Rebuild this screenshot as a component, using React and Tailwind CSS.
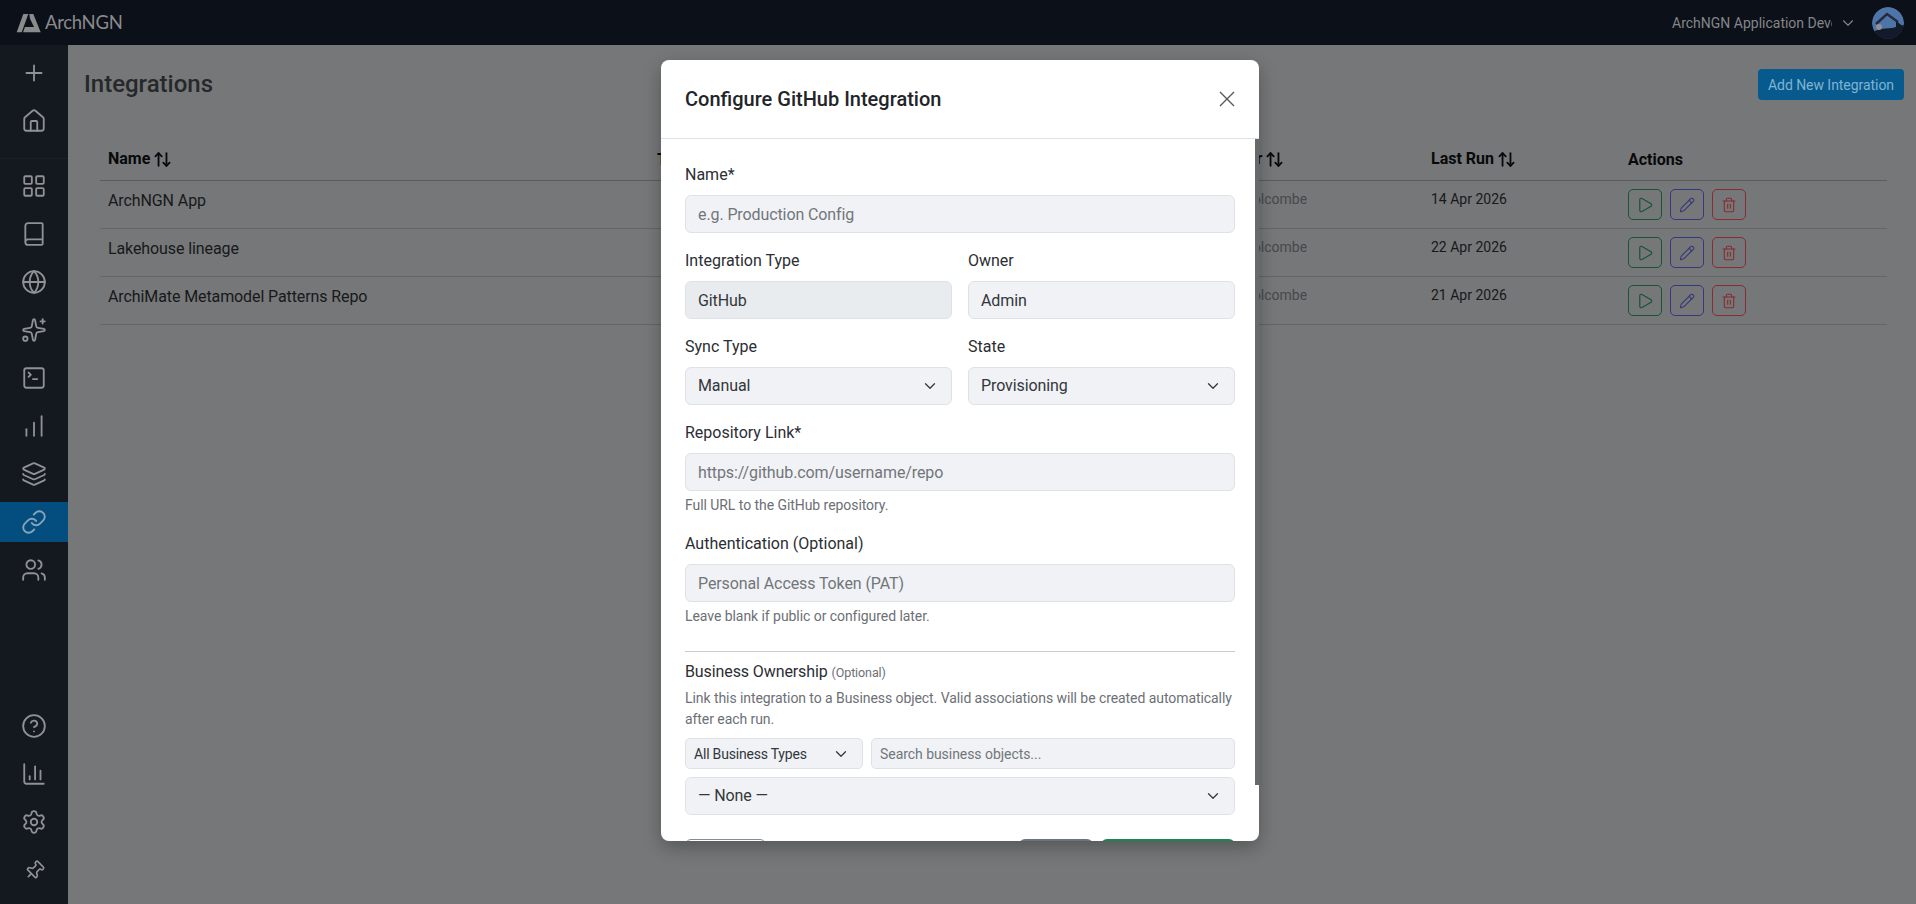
import React from 'react';
import {
  Plus, House, LayoutGrid, Book, Globe, Sparkles, SquareTerminal, ChartNoAxesColumnIncreasing,
  Layers, Link, Users, CircleHelp, ChartColumn, Settings, Pin, Play, Pencil, Trash2, ChevronDown, ArrowUpDown,
} from 'lucide-react';

function NavItem({ icon: Icon, active, small }) {
  return (
    <div className={`h-10 w-full flex items-center justify-center ${active ? 'bg-[#034e7e] text-[#8aa5b8]' : 'text-[#8f9194]'}`}>
      {small
        ? <Icon size={21} strokeWidth={1.9} className="rotate-45" />
        : <Icon size={26} strokeWidth={1.7} />}
    </div>
  );
}

function SortHead({ children }) {
  return (
    <th className="px-2 pb-[9px] pt-[10px] text-left align-top text-base leading-6 font-bold text-[#08090a] border-b border-[#5a5c5e]">
      <span className="inline-flex items-center gap-[3px]">
        {children}
        <ArrowUpDown size={19} strokeWidth={2.3} />
      </span>
    </th>
  );
}

function ActionButtons() {
  return (
    <div className="flex gap-2">
      <button className="w-[34px] h-[31px] rounded-[5px] border border-[#175533] text-[#175533] flex items-center justify-center"><Play size={18} strokeWidth={1.6} /></button>
      <button className="w-[34px] h-[31px] rounded-[5px] border border-[#35377f] text-[#35377f] flex items-center justify-center"><Pencil size={16} strokeWidth={1.6} /></button>
      <button className="w-[34px] h-[31px] rounded-[5px] border border-[#872c32] text-[#872c32] flex items-center justify-center"><Trash2 size={16} strokeWidth={1.6} /></button>
    </div>
  );
}

function Row({ name, date }) {
  const line = 'border-b border-[#636567] align-top';
  return (
    <tr>
      <td className={`${line} px-2 pt-2 text-base leading-6 tracking-[-0.1px] text-[#17191b]`}>{name}</td>
      <td className={line}></td>
      <td className={`${line} px-2 pt-2 text-sm leading-[21px] text-[#47494c] whitespace-nowrap`}>alex.holcombe</td>
      <td className={`${line} px-2 pt-2 text-sm leading-[21px] text-[#17191b]`}>{date}</td>
      <td className={`${line} px-2 pt-2 pb-2`}><ActionButtons /></td>
    </tr>
  );
}

function Label({ children }) {
  return <label className="block text-base leading-6 mb-2 text-[#2b2e33]">{children}</label>;
}

const fieldBase = 'block w-full h-[38px] px-3 rounded-[6px] border border-[#dee2e6] text-base tracking-[-0.1px] text-[#33373b] placeholder:text-[#72767b] outline-none';

function Input({ placeholder, value, disabled }) {
  return <input readOnly placeholder={placeholder} value={value} className={`${fieldBase} ${disabled ? 'bg-[#e9ecef]' : 'bg-[#f0f2f5]'}`} />;
}

function Select({ children, small, className = '' }) {
  return (
    <div className={`relative ${className}`}>
      <select className={small
        ? 'block w-full h-[31px] pl-2 pr-8 rounded-[5px] border border-[#dee2e6] bg-[#f0f2f5] text-sm tracking-[-0.2px] text-[#33373b] appearance-none outline-none'
        : `${fieldBase} bg-[#f0f2f5] appearance-none pr-9`}>
        <option>{children}</option>
      </select>
      <ChevronDown size={18} strokeWidth={1.75} className="absolute right-[13px] top-1/2 -translate-y-1/2 text-[#343a40] pointer-events-none" />
    </div>
  );
}

function Logo() {
  return (
    <div className="flex items-center gap-[3px] pl-4">
      <svg width="26" height="20" viewBox="0 0 26 20" fill="#8a8b8d">
        <path d="M7.3 1 H12.3 L5.7 19.3 H0.7 Z" />
        <path d="M13.3 1 H17.3 L24.7 19.3 H7 L9 14 H18 L14 5.7 Z" />
      </svg>
      <span className="font-['Lato',sans-serif] text-[18.5px] leading-none text-[#8a8b8d] tracking-[-0.3px]">ArchNGN</span>
    </div>
  );
}

function Avatar() {
  return (
    <svg width="32" height="32" viewBox="0 0 32 32" className="rounded-full">
      <circle cx="16" cy="16" r="16" fill="#4f74a8" />
      <path d="M0 25 L8 22 L20 21 L32 18 V32 H0 Z" fill="#131a2a" />
      <path d="M4 17 L15 7 L26 15" fill="none" stroke="#232b3d" strokeWidth="2.5" />
      <path d="M24 14 L32 20 V26 H24 Z" fill="#131a2a" />
      <circle cx="7" cy="20" r="3" fill="#8f9196" />
    </svg>
  );
}

export default function App() {
  const th = 'px-2 pb-[8px] pt-[11px] text-left align-top text-base leading-6 font-bold text-[#08090a] border-b border-[#5a5c5e]';
  return (
    <div className="relative w-full h-[904px] overflow-hidden bg-[#757778] font-['Roboto',sans-serif]">
      <header className="h-[45px] bg-[#0c1018] flex items-center justify-between">
        <Logo />
        <div className="flex items-center pr-3">
          <span className="w-40 overflow-hidden whitespace-nowrap text-sm text-[#83868a]">ArchNGN Application Development</span>
          <ChevronDown size={18} strokeWidth={1.5} className="ml-[7px] text-[#83868a]" />
          <div className="ml-[15px]"><Avatar /></div>
        </div>
      </header>
      <div className="flex h-[859px]">
        <aside className="w-[68px] shrink-0 bg-[#14181f] flex flex-col justify-between pb-[14px] pt-2">
          <div>
            <div className="flex flex-col gap-2 pb-[17px] border-b border-[#1b1f27]">
              <NavItem icon={Plus} />
              <NavItem icon={House} />
            </div>
            <div className="flex flex-col gap-2 pt-[7px]">
              <NavItem icon={LayoutGrid} />
              <NavItem icon={Book} />
              <NavItem icon={Globe} />
              <NavItem icon={Sparkles} />
              <NavItem icon={SquareTerminal} />
              <NavItem icon={ChartNoAxesColumnIncreasing} />
              <NavItem icon={Layers} />
              <NavItem icon={Link} active />
              <NavItem icon={Users} />
            </div>
          </div>
          <div className="flex flex-col gap-2">
            <NavItem icon={CircleHelp} />
            <NavItem icon={ChartColumn} />
            <NavItem icon={Settings} />
            <NavItem icon={Pin} small />
          </div>
        </aside>
        <main className="flex-1 pl-4 pr-3 pt-6">
          <div className="h-[31px] flex items-center justify-between">
            <h1 className="text-2xl leading-[28px] -mt-[2px] font-medium text-[#26282a]">Integrations</h1>
            <button className="h-[31px] w-[146px] rounded-[4px] bg-[#075a8d] text-sm tracking-[-0.05px] text-[#7fb4d3]">Add New Integration</button>
          </div>
          <div className="mt-[37px] ml-4 mr-[17px]">
            <table className="w-full table-fixed border-separate border-spacing-0">
              <colgroup>
                <col className="w-[549px]" />
                <col className="w-[559px]" />
                <col className="w-[215px]" />
                <col className="w-[197px]" />
                <col />
              </colgroup>
              <thead>
                <tr>
                  <SortHead>Name</SortHead>
                  <th className={th}>Type</th>
                  <SortHead>Owner</SortHead>
                  <SortHead>Last Run</SortHead>
                  <th className={th}>Actions</th>
                </tr>
              </thead>
              <tbody>
                <Row name="ArchNGN App" date="14 Apr 2026" />
                <Row name="Lakehouse lineage" date="22 Apr 2026" />
                <Row name="ArchiMate Metamodel Patterns Repo" date="21 Apr 2026" />
              </tbody>
            </table>
          </div>
        </main>
      </div>

      <div className="absolute left-[661px] top-[60px] w-[598px] h-[781px] bg-white rounded-lg overflow-hidden shadow-[0_6px_18px_rgba(0,0,0,0.28)] flex flex-col text-[#212529]">
        <div className="h-[79px] shrink-0 px-6 flex items-center justify-between border-b border-[#dee2e6]">
          <h2 className="text-xl font-medium text-[#212529]">Configure GitHub Integration</h2>
          <svg width="16" height="16" viewBox="0 0 16 16" stroke="#55585c" strokeWidth="1.4">
            <path d="M1 1 L15 15 M15 1 L1 15" />
          </svg>
        </div>
        <div className="relative flex-1 overflow-hidden px-6 pt-6">
          <div className="absolute right-0 top-0 w-1 h-[646px] bg-[#67696b]"></div>
          <div className="mb-4">
            <Label>Name*</Label>
            <Input placeholder="e.g. Production Config" />
          </div>
          <div className="grid grid-cols-2 gap-x-4 mb-4">
            <div>
              <Label>Integration Type</Label>
              <Input value="GitHub" disabled />
            </div>
            <div>
              <Label>Owner</Label>
              <Input value="Admin" />
            </div>
          </div>
          <div className="grid grid-cols-2 gap-x-4 mb-4">
            <div>
              <Label>Sync Type</Label>
              <Select>Manual</Select>
            </div>
            <div>
              <Label>State</Label>
              <Select>Provisioning</Select>
            </div>
          </div>
          <div className="mb-4">
            <Label>Repository Link*</Label>
            <Input placeholder="https://github.com/username/repo" />
            <p className="mt-1 text-sm leading-[21px] tracking-[-0.06px] text-[#6c7075]">Full URL to the GitHub repository.</p>
          </div>
          <div>
            <Label>Authentication (Optional)</Label>
            <Input placeholder="Personal Access Token (PAT)" />
            <p className="mt-1 text-sm leading-[21px] tracking-[-0.06px] text-[#6c7075]">Leave blank if public or configured later.</p>
          </div>
          <div className="mt-6 border-t border-[#c9ccd0] pt-2">
            <div className="h-6 text-base leading-6 tracking-[-0.1px] text-[#2b2e33]">Business Ownership <span className="text-[12.5px] text-[#6c7075]">(Optional)</span></div>
            <p className="mt-1 text-sm leading-[21px] tracking-[-0.07px] text-[#6c7075]">Link this integration to a Business object. Valid associations will be created automatically after each run.</p>
            <div className="mt-2 flex gap-2">
              <Select small className="w-[178px] shrink-0">All Business Types</Select>
              <input readOnly placeholder="Search business objects..." className="flex-1 min-w-0 h-[31px] px-2 rounded-[5px] border border-[#dee2e6] bg-[#f0f2f5] text-sm tracking-[-0.05px] placeholder:text-[#72767b] outline-none" />
            </div>
            <Select className="mt-2">— None —</Select>
          </div>
          <div className="mt-6 flex gap-2">
            <button className="w-[81px] h-[38px] rounded-[6px] border border-[#888c90] bg-white mr-auto"></button>
            <button className="w-[74px] h-[38px] rounded-[6px] bg-[#6c757d]"></button>
            <button className="w-[134px] h-[38px] rounded-[6px] bg-[#198754]"></button>
          </div>
        </div>
      </div>
    </div>
  );
}
